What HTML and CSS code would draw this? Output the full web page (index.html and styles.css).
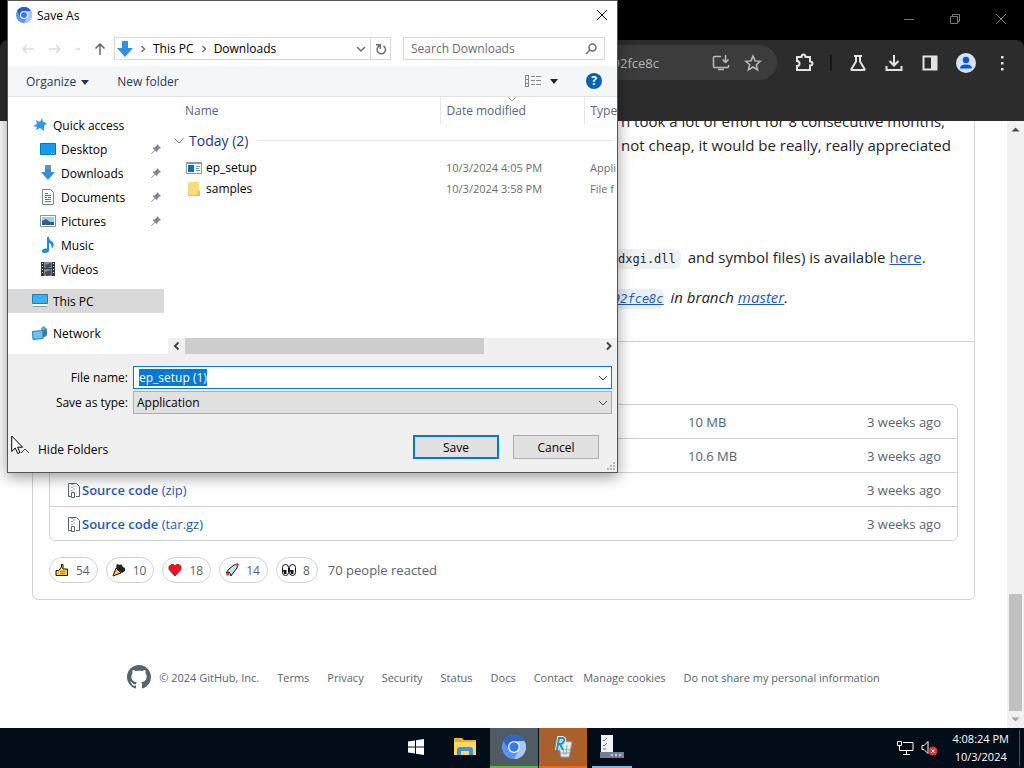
FILE: index.html
```html
<!DOCTYPE html>
<html lang="en">
<head>
    <meta charset="UTF-8">
    <meta name="viewport" content="width=device-width, initial-scale=1.0">
    <title>Save As</title>
    <link rel="stylesheet" href="styles.css">
</head>
<body>
    <!-- browser window -->
    <div class="browser">
        <div class="titlebar">
            <button aria-label="Minimize"><svg width="12" height="12" viewBox="0 0 12 12"><path d="M1 6.5h10"/></svg></button>
            <button aria-label="Restore"><svg width="12" height="12" viewBox="0 0 12 12"><path d="M1.5 3.5h7v7h-7zM3.5 3.500v-2h7v7h-2"/></svg></button>
            <button aria-label="Close"><svg width="12" height="12" viewBox="0 0 12 12"><path d="M1 1l10 10M11 1L1 11"/></svg></button>
        </div>
        <div class="toolbar">
            <div class="omnibox">
                <span class="url">92fce8c</span>
                <button aria-label="Install"><svg width="18" height="18" viewBox="0 0 18 18"><path d="M9 2.500H2.500q-1 0-1 1v9q0 1 1 1h13q1 0 1-1V11M6 15.500h6M13.500 1v7M10.500 5.500l3 3 3-3"/></svg></button>
                <button aria-label="Bookmark"><svg width="18" height="18" viewBox="0 0 18 18"><path d="M9 2l2 4.900 5.300.4-4 3.400 1.200 5.100L9 13l-4.500 2.800 1.200-5.100-4-3.400L7 6.900z"/></svg></button>
            </div>
            <button class="ext" aria-label="Extensions"><svg width="20" height="20" viewBox="0 0 20 20"><path d="M3 4h4.500q0-2.500 2-2.500t2 2.500H16v4.500q2.500 0 2.500 2t-2.500 2V17H3v-4q2.500 0 2.500-2.500T3 8z"/></svg></button>
            <span class="divider"></span>
            <button aria-label="Labs"><svg width="18" height="18" viewBox="0 0 18 18"><path d="M5 2h8M7 2v5.500L2.500 15q-.5 1 .5 1h12q1 0 .5-1L11 7.500V2"/></svg></button>
            <button aria-label="Downloads"><svg width="20" height="20" viewBox="0 0 20 20"><path d="M10 2v10M5.500 8l4.500 4.500L14.500 8M2.500 13v4h15v-4"/></svg></button>
            <button aria-label="Side panel"><svg width="18" height="18" viewBox="0 0 18 18"><path d="M2.500 2.500h13v13h-13z"/><path class="solid" d="M10 2.500h5.500v13H10z"/></svg></button>
            <button aria-label="Profile"><svg width="20" height="20" viewBox="0 0 20 20"><circle class="avatar" cx="10" cy="10" r="10"/><circle class="person" cx="10" cy="7" r="3.200"/><path class="person" d="M4 15.500q0-4 6-4t6 4z"/></svg></button>
            <button aria-label="Menu"><svg width="18" height="18" viewBox="0 0 18 18"><path class="solid" d="M8 2h2.500v2.500H8zM8 8h2.500v2.500H8zM8 14h2.500v2.500H8z"/></svg></button>
        </div>

        <div class="viewport">
            <div class="page">
                <main class="release">
                    <div class="notes">
                        <p>n took a lot of effort for 8 consecutive months,<br>not cheap, it would be really, really appreciated</p>
                        <p class="symbols"><code>dxgi.dll</code> and symbol files) is available <a href="#">here</a>.</p>
                        <p class="built"><a href="#"><code>92fce8c</code></a> in branch <a href="#">master</a>.</p>
                    </div>
                    <div class="assets">
                        <ul>
                            <li><span class="size">10 MB</span><span>3 weeks ago</span></li>
                            <li><span class="size">10.6 MB</span><span>3 weeks ago</span></li>
                            <li>
                                <svg width="14" height="16" viewBox="0 0 14 16"><path d="M4 14.500H1.500V1.500h8l3 3v10H9M5 2v1M7 3.500v1M5 5v1M7 6.500v1M5 8v1M4.500 10.500h3v5h-3z"/></svg>
                                <a href="#"><b>Source code</b> (zip)</a><span>3 weeks ago</span>
                            </li>
                            <li>
                                <svg width="14" height="16" viewBox="0 0 14 16"><path d="M4 14.500H1.500V1.500h8l3 3v10H9M5 2v1M7 3.500v1M5 5v1M7 6.500v1M5 8v1M4.500 10.500h3v5h-3z"/></svg>
                                <a href="#"><b>Source code</b> (tar.gz)</a><span>3 weeks ago</span>
                            </li>
                        </ul>
                        <div class="reactions">
                            <button><svg width="14" height="14" viewBox="0 0 14 14"><path fill="#ffc83d" stroke="#111" d="M1 7.500h2.500L6.500 4V1.500h1.500V6H12.500v6.500H1z"/><path stroke="#c77f00" fill="none" d="M5 8.500h5M5 10.500h5"/></svg>54</button>
                            <button><svg width="14" height="14" viewBox="0 0 14 14"><path fill="#ffc83d" stroke="#111" d="M1 13l3-8 5 5z"/><path fill="#222" d="M5 1l3 1 1-1 2 3 2 1v3l-3 2-4-3-2-3z"/></svg>10</button>
                            <button><svg width="14" height="14" viewBox="0 0 14 14"><path fill="#f0121f" stroke="#8b0006" stroke-width=".7" d="M7 13L1 6.500V3.500L3 1.500h2.500L7 3l1.500-1.500H11l2 2v3z"/></svg>18</button>
                            <button><svg width="14" height="14" viewBox="0 0 14 14"><path fill="#b6ecf7" stroke="#111" d="M4 6l5-4 4-1-1 4-4 5-2 3-1-3-1-1-3 1z"/><path fill="#e8272c" d="M10 1l3.500-.5L13 4zM1 10l2-1 2 2-3 2z"/></svg>14</button>
                            <button><svg width="14" height="14" viewBox="0 0 14 14"><g fill="#fff" stroke="#111"><rect x=".5" y="1.500" width="6" height="11" rx="3"/><rect x="7.500" y="1.500" width="6" height="11" rx="3"/></g><path fill="#111" d="M1 7h3.500v4H2zM8 7h3.500v4H9z"/></svg>8</button>
                            <span>70 people reacted</span>
                        </div>
                    </div>
                </main>
                <footer>
                    <svg width="24" height="24" viewBox="0 0 16 16"><path d="M8 0C3.580 0 0 3.580 0 8c0 3.540 2.290 6.530 5.470 7.590.4.070.55-.17.55-.38 0-.19-.01-.82-.01-1.490-2.010.37-2.530-.49-2.690-.94-.09-.23-.48-.94-.82-1.130-.28-.15-.68-.52-.01-.53.63-.01 1.080.58 1.230.82.72 1.210 1.870.87 2.330.66.07-.52.28-.87.51-1.070-1.780-.2-3.640-.89-3.640-3.950 0-.87.31-1.590.82-2.150-.08-.2-.36-1.020.08-2.120 0 0 .67-.21 2.200.82.64-.18 1.320-.27 2-.27s1.360.09 2 .27c1.530-1.040 2.200-.82 2.200-.82.44 1.100.16 1.920.08 2.120.51.56.82 1.270.82 2.150 0 3.070-1.870 3.750-3.650 3.950.29.25.54.73.54 1.480 0 1.070-.01 1.930-.01 2.200 0 .21.15.46.55.38A8.010 8.010 0 0 0 16 8c0-4.420-3.580-8-8-8z"/></svg>
                    <span class="copyright">© 2024 GitHub, Inc.</span>
                    <nav>
                        <a href="#">Terms</a>
                        <a href="#">Privacy</a>
                        <a href="#">Security</a>
                        <a href="#">Status</a>
                        <a href="#">Docs</a>
                        <a href="#">Contact</a>
                        <button>Manage cookies</button>
                        <button>Do not share my personal information</button>
                    </nav>
                </footer>
            </div>
            <div class="scrollbar">
                <svg width="17" height="17" viewBox="0 0 17 17"><path fill="#505050" d="M4.500 10.500l4-4 4 4z"/></svg>
                <div class="thumb"></div>
                <svg width="17" height="17" viewBox="0 0 17 17"><path fill="#a0a0a0" d="M4.500 6.500l4 4 4-4z"/></svg>
            </div>
        </div>
    </div>

    <div class="taskbar">
        <div class="apps">
            <button aria-label="Start"><svg width="16" height="16" viewBox="0 0 16 16"><path fill="#fff" d="M0 2.500l7-1v6H0zM8 1.300L16 0v7.500H8zM0 8.500h7v6l-7-1zM8 8.500h8V16l-8-1.300z"/></svg></button>
            <button aria-label="File Explorer"><svg width="22" height="20" viewBox="0 0 22 20"><path fill="#e8b02e" d="M0 1h8l2 2h12v15H0z"/><path fill="#ffd766" d="M0 5h22v13H0z"/><path fill="#3f93cf" d="M3 18v-5q0-3 3-3h10q3 0 3 3v5h-4v-4H7v4z"/></svg></button>
            <button class="chromium" aria-label="Chromium"><svg width="24" height="24" viewBox="0 0 24 24"><circle cx="12" cy="12" r="12" fill="#5b93f2"/><path fill="#2f64cf" d="M1.600 6A12 12 0 0 1 22.400 6H12L7 15z"/><path fill="#a9c9fb" d="M22.400 6A12 12 0 0 1 12 24l5-9-1-9z"/><circle cx="12" cy="12" r="6" fill="#fff"/><circle cx="12" cy="12" r="4.700" fill="#367be8"/></svg></button>
            <button class="uninstaller" aria-label="Uninstaller"><svg width="20" height="22" viewBox="0 0 20 22"><path fill="#e9eef1" stroke="#8fa2aa" d="M5 5l14 1-3 15H8z"/><path stroke="#93aab4" d="M10 9l1 10M14 9l-1 10M7 13l10 1M8 17h8" fill="none"/><path fill="none" stroke="#dff3fb" stroke-width="4" d="M4 14L6 2h3q3 0 2 3t-4 3H5M7 8l3 6"/><path fill="none" stroke="#1f8cc4" stroke-width="2" d="M4 14L6 2h3q3 0 2 3t-4 3H5M7 8l3 6"/></svg></button>
            <button class="setup" aria-label="Setup"><svg width="24" height="24" viewBox="0 0 24 24"><path fill="#f3f3f3" d="M1 0h12v17H1z"/><path fill="none" stroke="#777" d="M3 5l1 1 3-3M3 10l1 1 3-3M3 14h3"/><path fill="#777b94" d="M0 17h24v6H0z"/><path fill="#c6c9da" d="M11 19h2v2h-2zM15 19h2v2h-2zM19 19h2v2h-2z"/></svg></button>
        </div>
        <div class="tray">
            <svg width="17" height="16" viewBox="0 0 17 16"><path d="M6 2.500h10v8H4M9.500 11v3M6 14.500h7M.5 1.500h4v4h-4zM2.500 6v4.500H5"/></svg>
            <svg width="18" height="16" viewBox="0 0 18 16"><path d="M1 5.500h2l4-4v12l-4-4H1z"/><circle cx="12" cy="11" r="4.500" fill="#d33" stroke="none"/><path d="M10 9l4 4M14 9l-4 4"/></svg>
            <div class="clock">4:08:24 PM<br>10/3/2024</div>
        </div>
    </div>

    <!-- save dialog -->
    <form class="dialog">
        <div class="dialog-title">
            <svg width="16" height="16" viewBox="0 0 24 24"><circle cx="12" cy="12" r="12" fill="#5b93f2"/><path fill="#2460cc" d="M1.600 6A12 12 0 0 1 22.400 6H12L7 15z"/><path fill="#a9c9fb" d="M22.400 6A12 12 0 0 1 12 24l5-9-1-9z"/><circle cx="12" cy="12" r="6" fill="#fff"/><circle cx="12" cy="12" r="4.500" fill="#367be8"/></svg>
            <span>Save As</span>
            <button type="button" aria-label="Close"><svg width="12" height="12" viewBox="0 0 12 12"><path d="M1 1l10 10M11 1L1 11"/></svg></button>
        </div>
        <div class="address">
            <div class="history">
                <svg width="14" height="12" viewBox="0 0 14 12"><path stroke="#dcdcdc" d="M13 6H2M6 2L2 6l4 4"/></svg>
                <svg width="14" height="12" viewBox="0 0 14 12"><path stroke="#dcdcdc" d="M1 6h11M8 2l4 4-4 4"/></svg>
                <svg width="8" height="12" viewBox="0 0 8 12"><path stroke="#dcdcdc" d="M2 5l2 2 2-2"/></svg>
                <svg width="12" height="12" viewBox="0 0 12 12"><path stroke="#666" stroke-width="1.500" d="M6 12V1M1.500 5.500L6 1l4.500 4.500"/></svg>
            </div>
            <div class="path">
                <svg width="16" height="16" viewBox="0 0 16 16"><path fill="#3190dc" d="M5 0h6v7h5l-8 9-8-9h5z"/></svg>
                <svg width="6" height="8" viewBox="0 0 6 8"><path class="chev" d="M1.500 1l3 3-3 3"/></svg>
                <span>This PC</span>
                <svg width="6" height="8" viewBox="0 0 6 8"><path class="chev" d="M1.500 1l3 3-3 3"/></svg>
                <span>Downloads</span>
                <button type="button" class="drop" aria-label="Previous locations"><svg width="10" height="8" viewBox="0 0 10 8"><path class="chev" d="M1 2l4 4 4-4"/></svg></button>
                <button type="button" class="refresh" aria-label="Refresh"><svg width="12" height="12" viewBox="0 0 12 12"><path class="chev" d="M4.500 2.800A4.200 4.200 0 1 0 8.500 3M1 1.700h4.300V6"/></svg></button>
            </div>
            <label class="search">
                <input type="text" placeholder="Search Downloads" aria-label="Search Downloads">
                <svg width="12" height="12" viewBox="0 0 12 12"><circle class="chev" cx="7.500" cy="4.500" r="3.500"/><path class="chev" stroke-width="2" d="M5 7l-4 4"/></svg>
            </label>
        </div>
        <div class="commands">
            <button type="button">Organize <svg width="8" height="5" viewBox="0 0 8 5"><path fill="#1e395b" d="M0 0h8L4 5z"/></svg></button>
            <button type="button">New folder</button>
            <button type="button" class="view" aria-label="Change view"><svg width="18" height="14" viewBox="0 0 18 14"><path fill="none" stroke="#888" d="M1.500 1v12M4.500 1v12M1 1.500h4M1 5.500h4M1 9.500h4M1 12.500h4M7 2.500h4M12 2.500h5M7 6.500h4M12 6.500h5M7 10.500h4M12 10.500h5"/></svg><svg width="8" height="5" viewBox="0 0 8 5"><path fill="#222" d="M0 0h8L4 5z"/></svg></button>
            <button type="button" class="help" aria-label="Help">?</button>
        </div>
        <div class="explorer">
            <ul class="places">
                <li class="root"><svg width="16" height="16" viewBox="0 0 16 16"><path fill="#2e9be0" d="M10 1l1 4 4 1-3 3 0 5-4-3-4 2 1-3-4-1 4-2-1-4 4 2z"/></svg>Quick access</li>
                <li><svg width="16" height="16" viewBox="0 0 16 16"><path fill="#149bf0" stroke="#0871b8" d="M.5 2.500h15v11H.5z"/><path stroke="#bfe4fb" d="M11 12.500h1M13 12.500h1"/></svg>Desktop<svg class="pin" width="10" height="10" viewBox="0 0 10 10"><path d="M6 0l4 4-1 .5-.5-.3L6.500 6.500 6.300 8.500 4 6.500.5 10 0 9.500 3.500 6 1.500 3.700l2-.2 2.300-2L5.500 1z"/></svg></li>
                <li><svg width="16" height="16" viewBox="0 0 16 16"><path fill="#3190dc" d="M5 0h6v7h4l-7 8-7-8h4z"/><path fill="#7f8b98" d="M5 0h6v4H5z"/></svg>Downloads<svg class="pin" width="10" height="10" viewBox="0 0 10 10"><path d="M6 0l4 4-1 .5-.5-.3L6.500 6.500 6.300 8.500 4 6.500.5 10 0 9.500 3.500 6 1.500 3.700l2-.2 2.300-2L5.500 1z"/></svg></li>
                <li><svg width="16" height="16" viewBox="0 0 16 16"><path fill="#fff" stroke="#6e8797" d="M2.500.5h8l3 3v12h-11z"/><path stroke="#3a83b5" d="M5 4.500h3M5 6.500h6M5 8.500h2M8 8.500h3M5 10.500h6M5 12.500h6"/></svg>Documents<svg class="pin" width="10" height="10" viewBox="0 0 10 10"><path d="M6 0l4 4-1 .5-.5-.3L6.500 6.500 6.300 8.500 4 6.500.5 10 0 9.500 3.500 6 1.500 3.700l2-.2 2.300-2L5.500 1z"/></svg></li>
                <li><svg width="16" height="16" viewBox="0 0 16 16"><path fill="#fff" stroke="#7f93a3" d="M.5 2.500h15v11H.5z"/><path fill="#9fd0f0" d="M2 4h12v5H2z"/><path fill="#34617f" d="M2 8l4-2 4 3h4v3H2z"/></svg>Pictures<svg class="pin" width="10" height="10" viewBox="0 0 10 10"><path d="M6 0l4 4-1 .5-.5-.3L6.500 6.500 6.300 8.500 4 6.500.5 10 0 9.500 3.500 6 1.500 3.700l2-.2 2.300-2L5.500 1z"/></svg></li>
                <li><svg width="16" height="16" viewBox="0 0 16 16"><path fill="#1f8be0" d="M7 0h2q0 3 3 4.500T12.500 11l-1.200-.5q1-3-2.300-4.500v7q0 3-4 3-3 0-3-2 0-3 5-2.500z"/></svg>Music</li>
                <li><svg width="16" height="16" viewBox="0 0 16 16"><path fill="#333" d="M1 1h14v14H1z"/><path fill="#7e8a9c" d="M4 1h8v6H4zM4 8h8v7H4z"/><path fill="#434b63" d="M5 4l6-2v4l-5 1zM5 11l6-2v5l-5 1z"/><path stroke="#ddd" stroke-dasharray="1 2" d="M2.500 2v12M13.500 2v12"/></svg>Videos</li>
                <li class="root selected"><svg width="16" height="16" viewBox="0 0 16 16"><path fill="#3db0f0" stroke="#287eb0" d="M.5 1.500h15v9H.5z"/><path fill="#fff" d="M1 11h14v2H1z"/><path fill="#8b989f" d="M1 13h14v1H1z"/></svg>This PC</li>
                <li class="root network"><svg width="16" height="16" viewBox="0 0 16 16"><path fill="#62a9b5" d="M9 3l3-2 3 3v7l-5 2z"/><path fill="#6cc0f5" stroke="#2577bb" d="M.5 6.500L11 5.500v8L1 14.500z"/><path fill="#347dab" d="M11 5l4-1v5l-4 4z"/></svg>Network</li>
            </ul>
            <div class="files">
                <table>
                    <thead>
                        <tr><th class="name">Name</th><th class="date"><svg width="8" height="5" viewBox="0 0 8 5"><path fill="none" stroke="#999" d="M.5.5L4 4 7.500.5"/></svg>Date modified</th><th class="type">Type</th></tr>
                    </thead>
                    <tbody>
                        <tr class="group"><th colspan="3"><div><svg width="10" height="8" viewBox="0 0 10 8"><path fill="none" stroke="#777" d="M.5 1.500L5 6l4.500-4.500"/></svg>Today (2)<i></i></div></th></tr>
                        <tr><td class="file"><svg width="16" height="16" viewBox="0 0 16 16"><path fill="#fff" stroke="#8497a5" d="M.5 2.500h15v11H.5z"/><path fill="#7f9db4" d="M1 2h14v2H1z"/><path fill="#1a6cb4" d="M2 5h6v7H2z"/><path stroke="#6f93af" d="M10 6.500h4M10 8.500h3M10 10.500h4"/></svg>ep_setup</td><td>10/3/2024 4:05 PM</td><td>Appli</td></tr>
                        <tr><td class="file"><svg width="16" height="16" viewBox="0 0 16 16"><path fill="#f8dc7c" d="M2 1h11v8l1 1v5H2z"/><path fill="#e6c258" d="M12 9l2 1v5h-3zM2 14h9v1H2z"/></svg>samples</td><td>10/3/2024 3:58 PM</td><td>File f</td></tr>
                    </tbody>
                </table>
                <div class="hscroll">
                    <svg width="17" height="16" viewBox="0 0 17 16"><path d="M10.500 4.500L7 8l3.500 3.500"/></svg>
                    <div class="track"><div class="thumb"></div></div>
                    <svg width="17" height="16" viewBox="0 0 17 16"><path d="M7 4.500L10.500 8 7 11.500"/></svg>
                </div>
            </div>
        </div>
        <div class="fields">
            <label for="filename">File name:</label>
            <div class="combo">
                <input type="text" id="filename" value="ep_setup (1)">
                <svg width="10" height="6" viewBox="0 0 10 6"><path d="M1 1l4 4 4-4"/></svg>
            </div>
            <label for="filetype">Save as type:</label>
            <div class="combo">
                <select id="filetype"><option>Application</option></select>
                <svg width="10" height="6" viewBox="0 0 10 6"><path d="M1 1l4 4 4-4"/></svg>
            </div>
        </div>
        <div class="actions">
            <button type="button" class="folders"><svg width="10" height="6" viewBox="0 0 10 6"><path d="M1 5l4-4 4 4"/></svg>Hide Folders</button>
            <button type="button" class="save">Save</button>
            <button type="button" class="cancel">Cancel</button>
        </div>
        <svg class="grip" width="10" height="10" viewBox="0 0 10 10"><path fill="#b5b5b5" d="M7 1h2v2H7zM4 4h2v2H4zM7 4h2v2H7zM1 7h2v2H1zM4 7h2v2H4zM7 7h2v2H7z"/></svg>
    </form>

    <svg class="cursor" width="13" height="20" viewBox="0 0 13 20"><path fill="#fff" stroke="#000" d="M.7 1v15.500l3.600-3.500 2.400 5.500 2.300-1-2.400-5.300h5z"/></svg>

    <script>
        // the proposed name comes up selected
        const filename = document.getElementById("filename");
        filename.focus();
        filename.select();
    </script>
</body>
</html>
```
FILE: styles.css
```css
* {
    box-sizing: border-box;
}
body {
    margin: 0;
    height: 100vh;
    display: flex;
    flex-direction: column;
    overflow: hidden;
    background: #000;
    font-family: "Open Sans", "Noto Sans", sans-serif;
    font-size: 12px;
}
button, input, select {
    font: inherit;
    color: inherit;
    margin: 0;
    padding: 0;
    border: none;
    background: none;
}
svg {
    flex: none;
}
ul, p {
    margin: 0;
    padding: 0;
    list-style: none;
}
a {
    color: #1f5bb5;
}

/* browser window */
.browser {
    flex: 1;
    min-height: 0;
    display: flex;
    flex-direction: column;
}
.titlebar {
    height: 40px;
    display: flex;
    justify-content: flex-end;
}
.titlebar button {
    width: 46px;
}
.titlebar path {
    fill: none;
    stroke: #777;
}
.toolbar {
    height: 81px;
    padding: 5px 4px 0 8px;
    display: flex;
    align-items: flex-start;
    background: #2c2c2c;
    border-radius: 8px 8px 0 0;
}
.toolbar button {
    width: 36px;
    height: 36px;
    display: flex;
    align-items: center;
    justify-content: center;
}
.toolbar path {
    fill: none;
    stroke: #e3e3e3;
    stroke-width: 2;
}
.toolbar .solid {
    fill: #e3e3e3;
    stroke: none;
}
.toolbar .avatar {
    fill: #d3e3fd;
}
.toolbar .person {
    fill: #0b57d0;
    stroke: none;
}
.omnibox {
    flex: 1;
    height: 35px;
    padding-right: 8px;
    display: flex;
    align-items: center;
    justify-content: flex-end;
    border-radius: 18px;
    background: #3c3c3c;
}
.omnibox .url {
    margin-right: 46px;
    font-size: 13px;
    color: #b5b5b5;
}
.omnibox button {
    width: 32px;
}
.omnibox path {
    stroke: #bbb;
    stroke-width: 1.5;
}
.toolbar .ext {
    margin-left: 9px;
}
.divider {
    width: 2px;
    height: 16px;
    margin: 10px 8px 0;
    background: #161616;
}
.viewport {
    flex: 1;
    min-height: 0;
    display: flex;
    background: #fff;
}
.page {
    flex: 1;
    overflow: hidden;
    color: #59636e;
}
.release {
    margin: -16px 32px 0;
    border: 1px solid #d0d3d6;
    border-radius: 6px;
}
.notes {
    height: 236px;
    padding: 3px 0 0 588px;
    border-bottom: 1px solid #d0d3d6;
    font-size: 15px;
    line-height: 24px;
    color: #1f2328;
    white-space: nowrap;
}
.notes .symbols {
    margin-top: 88px;
}
.notes .built {
    margin-top: 16px;
    font-style: italic;
}
.notes .symbols, .notes .built {
    height: 24px;
    margin-left: -8px;
}
.notes code {
    margin-right: 3px;
    padding: 3px 5px;
    border-radius: 6px;
    background: #f0f1f2;
    font-family: "DejaVu Sans Mono", monospace;
    font-size: 12px;
    line-height: 16px;
}
.notes .built code {
    padding: 3px 0;
    background: #e6f1fb;
}
.assets {
    padding: 62px 16px 16px;
    font-size: 13px;
}
.assets ul {
    border: 1px solid #d0d3d6;
    border-radius: 6px;
}
.assets li {
    height: 33px;
    padding: 0 16px;
    display: flex;
    align-items: center;
}
.assets li + li {
    height: 34px;
    border-top: 1px solid #d0d3d6;
}
.assets a {
    text-decoration: none;
}
.assets b {
    font-weight: 600;
}
.assets li > svg {
    margin-right: 1px;
    margin-left: 1px;
}
.assets li path {
    fill: none;
    stroke: #59636e;
}
.assets li span:last-child {
    margin-left: auto;
}
.size {
    padding-left: 622px;
}
.reactions {
    margin-top: 16px;
    display: flex;
    align-items: center;
    gap: 8px;
}
.reactions button {
    height: 26px;
    padding: 0 7px 0 5px;
    display: flex;
    align-items: center;
    gap: 7px;
    border: 1px solid #d0d3d6;
    border-radius: 13px;
    font-size: 12px;
}
.reactions span {
    margin-left: 2px;
}
footer {
    margin-top: 65px;
    display: flex;
    align-items: center;
    justify-content: center;
    font-size: 11px;
}
footer svg {
    fill: #59636e;
}
footer .copyright {
    margin: 0 18px 0 8px;
}
footer nav {
    display: flex;
    gap: 18px;
}
footer a {
    color: inherit;
    text-decoration: none;
}
footer a + button {
    margin-left: -8px;
}
.scrollbar {
    width: 17px;
    display: flex;
    flex-direction: column;
    justify-content: flex-end;
    background: #f1f1f1;
}
.scrollbar svg:first-child {
    margin-bottom: auto;
}
.scrollbar .thumb {
    height: 117px;
    margin: 0 2px;
    background: #c1c1c1;
}

/* taskbar */
.taskbar {
    height: 40px;
    display: grid;
    grid-template-columns: 1fr auto 1fr;
    background: #020d19;
    color: #fff;
}
.apps {
    grid-column: 2;
    display: flex;
    gap: 1px;
}
.apps button {
    width: 48px;
    border-bottom: 2px solid transparent;
    display: flex;
    align-items: center;
    justify-content: center;
}
.apps .chromium {
    background: #505b64;
    border-color: #4fc52c;
}
.apps .uninstaller {
    background: #a9602a;
    border-color: #ff6a00;
}
.apps .setup {
    width: 40px;
    margin-left: 4px;
    border-color: #76b9ed;
}
.tray {
    display: flex;
    align-items: center;
    justify-content: flex-end;
    gap: 7px;
    padding-right: 4px;
}
.tray path {
    fill: none;
    stroke: #fff;
}
.clock {
    padding: 0 10px 0 6px;
    border-right: 1px solid #4a535c;
    font-size: 11px;
    line-height: 18px;
    text-align: center;
}

/* save dialog */
.dialog {
    position: absolute;
    left: 7px;
    top: 0;
    width: 611px;
    display: flex;
    flex-direction: column;
    border: 1px solid #555;
    background: #fff;
    color: #000;
    box-shadow: 0 4px 14px rgba(0, 0, 0, .4);
    white-space: nowrap;
}
.dialog-title {
    height: 30px;
    padding: 0 9px 2px 8px;
    display: flex;
    align-items: center;
    gap: 5px;
}
.dialog-title button {
    height: 12px;
    margin-left: auto;
}
.dialog-title button svg {
    display: block;
}
.dialog-title button path {
    stroke: #111;
}
.address {
    height: 35px;
    padding: 0 12px;
    display: flex;
    align-items: center;
}
.history {
    width: 94px;
    padding-left: 1px;
    display: flex;
    gap: 13px;
}
.history svg:nth-child(n+3) {
    margin-left: -1px;
}
.history path, .dialog .chev {
    fill: none;
    stroke-width: 1.5;
}
.dialog .chev {
    stroke: #707070;
}
.path {
    flex: 1;
    height: 23px;
    padding-left: 2px;
    display: flex;
    align-items: center;
    gap: 7px;
    border: 1px solid #d9d9d9;
}
.drop {
    margin-left: auto;
}
.refresh {
    width: 20px;
    align-self: stretch;
    display: flex;
    align-items: center;
    justify-content: center;
    margin-left: -3px;
    border-left: 1px solid #d9d9d9;
}
.search {
    width: 202px;
    height: 23px;
    margin-left: 12px;
    padding: 0 7px;
    display: flex;
    align-items: center;
    border: 1px solid #d9d9d9;
}
.search input {
    flex: 1;
    min-width: 0;
}
.search input::placeholder {
    color: #6d6d6d;
}
.commands {
    height: 31px;
    padding: 0 15px 0 18px;
    display: flex;
    align-items: center;
    gap: 28px;
    background: #f5f6f7;
    border-bottom: 1px solid #e3e5e7;
    color: #1e395b;
}
.commands button svg {
    margin-left: 2px;
    vertical-align: middle;
}
.view {
    margin-left: auto;
    display: flex;
    align-items: center;
    gap: 6px;
}
.commands .help {
    width: 16px;
    height: 16px;
    border-radius: 50%;
    background: #0063b1;
    color: #fff;
    font-weight: bold;
    line-height: 16px;
}
.explorer {
    height: 257px;
    display: flex;
}
.places {
    width: 156px;
    padding-top: 16px;
}
.places li {
    height: 24px;
    padding: 0 3px 0 32px;
    display: flex;
    align-items: center;
    gap: 5px;
}
.places .root {
    padding-left: 24px;
}
.places .selected, .places .network {
    margin-top: 8px;
}
.places .selected {
    background: #d9d9d9;
}
.places .pin {
    margin-left: auto;
    fill: #7f868d;
}
.files {
    flex: 1;
    min-width: 0;
    padding-left: 4px;
    display: flex;
    flex-direction: column;
}
.files table {
    width: 100%;
    table-layout: fixed;
    border-collapse: collapse;
    color: #6d6d6d;
}
.files th {
    padding: 0 0 0 6px;
    font-weight: normal;
    text-align: left;
}
.files thead th {
    position: relative;
    height: 27px;
    border-right: 1px solid #e5e5e5;
    color: #5a6675;
}
.files thead th svg {
    position: absolute;
    top: 0;
    left: 50%;
    transform: translateX(-50%);
}
.files .name {
    width: 272px;
    padding-left: 17px;
}
.files .date {
    width: 144px;
}
.files thead .type {
    border-right: none;
}
.files .group th {
    height: 33px;
}
.group div {
    display: flex;
    align-items: center;
    gap: 5px;
    color: #1e3287;
    font-size: 14px;
}
.group i {
    flex: 1;
    margin-right: 4px;
    margin-left: 4px;
    border-top: 1px solid #e5e5e5;
}
.files td {
    height: 21px;
    padding: 0 0 0 6px;
    overflow: hidden;
    font-size: 11px;
}
.files .file {
    padding-left: 18px;
    color: #000;
    font-size: 12px;
}
.file svg {
    margin-right: 4px;
    vertical-align: middle;
}
.hscroll {
    height: 16px;
    margin-top: auto;
    display: flex;
    background: #f0f0f0;
}
.hscroll path {
    fill: none;
    stroke: #444;
    stroke-width: 2;
}
.hscroll .track {
    flex: 1;
}
.hscroll .thumb {
    width: 72%;
    height: 16px;
    background: #cdcdcd;
}
.fields {
    padding: 12px 5px 0 0;
    display: grid;
    grid-template-columns: 120px 1fr;
    column-gap: 5px;
    row-gap: 2px;
    background: #f0f0f0;
}
.fields label {
    line-height: 23px;
    text-align: right;
}
.combo {
    display: grid;
    align-items: center;
}
.combo input, .combo select, .combo svg {
    grid-area: 1 / 1;
}
.combo input, .combo select {
    height: 23px;
    padding: 0 5px;
    appearance: none;
    border: 1px solid #adadad;
    background: #e1e1e1;
    outline: none;
}
.combo select {
    padding: 0 3px;
}
.combo input {
    border-color: #0078d7;
    background: #fff;
}
.combo input::selection {
    background: #0078d7;
    color: #fff;
}
.combo svg {
    margin-right: 4px;
    justify-self: end;
    pointer-events: none;
}
.combo path, .folders path {
    fill: none;
    stroke: #444;
}
.actions {
    padding: 21px 18px 13px 12px;
    display: flex;
    align-items: center;
    gap: 14px;
    background: #f0f0f0;
}
.folders {
    margin-right: auto;
    padding-top: 4px;
}
.folders svg {
    margin-right: 8px;
}
.save, .cancel {
    width: 86px;
    height: 24px;
    border: 1px solid #adadad;
    background: #e1e1e1;
}
.save {
    border: 2px solid #0078d7;
}
.grip {
    position: absolute;
    right: 1px;
    bottom: 1px;
}
.cursor {
    position: absolute;
    left: 11px;
    top: 435px;
}
```
